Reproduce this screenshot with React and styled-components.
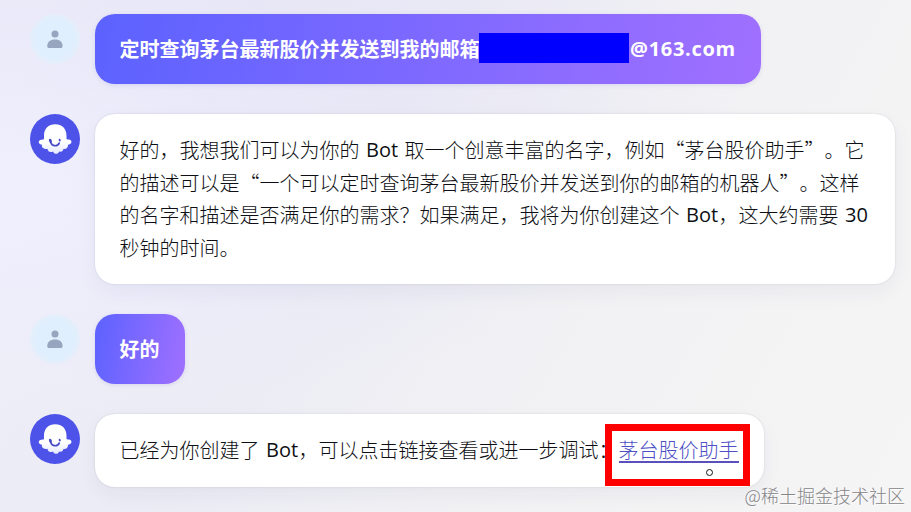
import React from "react";
import styled, { createGlobalStyle, css } from "styled-components";

const GlobalStyle = createGlobalStyle`
  * { box-sizing: border-box; }
  html, body { margin: 0; overflow: hidden; }
`;

const Page = styled.main`
  position: relative;
  width: 911px;
  height: 512px;
  padding: 14px 0 0 30px;
  display: flex;
  flex-direction: column;
  overflow: hidden;
  font-family: "Noto Sans CJK SC", sans-serif;
  font-size: 20px;
  text-spacing-trim: space-all;
  color: #0e0f14;
  background:
    radial-gradient(ellipse 420px 240px at 0 190px, rgba(240, 241, 255, 0.9), rgba(238, 239, 254, 0) 100%),
    radial-gradient(ellipse 560px 300px at 180px 90px, rgba(228, 226, 245, 0.8), rgba(232, 230, 246, 0) 100%),
    linear-gradient(120deg, #eeedf9 0%, #ececf5 38%, #f2f2f4 66%, #f5f5f5 100%);
`;

const Row = styled.div`
  display: flex;
  align-items: flex-start;
  gap: 15px;
  margin-bottom: 30px;
`;

const Avatar = styled.svg`
  display: block;
  flex: none;
  width: 50px;
  height: 50px;
`;

const Bubble = styled.div`
  flex: none;
  width: ${(p) => p.$width}px;
  height: ${(p) => p.$height}px;
  padding: ${(p) => p.$top}px 0 0 24.5px;
  border-radius: 20px;
  line-height: 32.6px;
  white-space: nowrap;
  ${(p) =>
    p.$user
      ? css`
          color: #fff;
          font-weight: 700;
          background: linear-gradient(100deg, #5c62ff 0%, #a070ff 100%);
          box-shadow: 0 1px 4px rgba(90, 80, 180, 0.15);
        `
      : css`
          font-weight: 300;
          background: #fff;
          box-shadow: 0 0 2px rgba(40, 40, 80, 0.16), 0 8px 20px rgba(40, 40, 90, 0.05);
        `}
`;

const Line = styled.div`
  display: flex;
  height: 32.6px;
`;

const Latin = styled.span`
  flex: none;
  width: ${(p) => p.$width}px;
  padding-left: ${(p) => p.$indent ?? 6.5}px;
  font-family: "Open Sans", "Noto Sans", sans-serif;
  font-weight: ${(p) => p.$weight || 500};
  font-size: 20px;
  letter-spacing: ${(p) => p.$spacing || 0}px;
`;

const Redaction = styled.span`
  flex: none;
  width: 150px;
  height: 30px;
  margin: 0 0 0 -0.5px;
  background: #0000ff;
`;

const Link = styled.a`
  position: relative;
  height: 29px;
  color: #4d4fc4;
  border-bottom: 2px solid #5a50bd;
`;

const Highlight = styled.span`
  position: absolute;
  left: -14px;
  top: -10px;
  width: 145px;
  height: 62px;
  border: 7px solid #ff0000;
`;

const Pointer = styled.span`
  position: absolute;
  left: 87px;
  top: 35px;
  width: 7px;
  height: 7px;
  border: 1px solid #151515;
  border-radius: 50%;
  background: #fff;
`;

const Watermark = styled.div`
  position: absolute;
  right: 6px;
  bottom: 5px;
  font-size: 18px;
  line-height: 24px;
  font-weight: 300;
  color: #858588;
  text-shadow: 1px 1px 0 rgba(255, 255, 255, 0.8);
  white-space: nowrap;
`;

const UserAvatar = () => (
  <Avatar viewBox="0 0 50 50">
    <defs>
      <radialGradient id="halo">
        <stop offset="0.75" stopColor="#dfeffd" />
        <stop offset="1" stopColor="#e6eefb" />
      </radialGradient>
    </defs>
    <circle cx="25" cy="25" r="25" fill="url(#halo)" />
    <circle cx="25" cy="20" r="3.5" fill="#98a5bf" />
    <path d="M17.2 32.2C17.2 28 20.2 25.5 25 25.5s7.6 2.5 7.6 6.7c0 1.4-1.1 1.8-2.5 1.8H19.7c-1.4 0-2.5-.4-2.5-1.8Z" fill="#98a5bf" />
  </Avatar>
);

const BotAvatar = () => (
  <Avatar viewBox="0 0 50 50">
    <defs>
      <linearGradient id="ghost" x1="0" y1="0" x2="0" y2="1">
        <stop offset="0.6" stopColor="#ffffff" />
        <stop offset="1" stopColor="#e4e8ff" />
      </linearGradient>
    </defs>
    <circle cx="25" cy="25" r="25" fill="#4d53e8" />
    <path
      d="M25.2 10.2C18.4 10.2 14 14.8 14 21.4V25.2C12.6 26 10.4 25.2 9.2 26.7C8 28.4 9.4 30.6 11.8 30.6C11.5 33.2 13 35 15.6 35C16.3 35 16.9 34.9 17.5 34.7C17.8 37 19.3 38.3 21 38C21.8 37.9 22.5 37.7 23 37.4C23.6 39 24.7 39.8 26 39.8C27.5 39.8 28.6 38.9 29.1 37.4C31.1 38.3 33.2 37.2 33.3 35C35.9 35.6 38.1 33.8 38.1 30.8C40.7 30.8 42.3 28.5 41 26.6C39.9 25.1 37.9 25.9 36.5 25V21.4C36.5 14.8 32.1 10.2 25.2 10.2Z"
      fill="url(#ghost)"
    />
    <ellipse cx="20.4" cy="26.8" rx="1.4" ry="2.1" fill="#4549c4" transform="rotate(-18 20.4 26.8)" />
    <ellipse cx="29.7" cy="26.2" rx="1" ry="1.4" fill="#4549c4" transform="rotate(-15 29.7 26.2)" />
    <path d="M20.8 28.4C22 32.5 27.6 32.9 29.2 29.1" fill="none" stroke="#4549c4" strokeWidth="1.7" strokeLinecap="round" />
  </Avatar>
);

export default function App() {
  return (
    <>
      <GlobalStyle />
      <Page lang="zh-CN">
        <Row>
          <UserAvatar />
          <Bubble $user $width={666} $height={70} $top={19}>
            <Line>
              定时查询茅台最新股价并发送到我的邮箱
              <Redaction />
              <Latin $width={110} $indent={1} $weight={700} $spacing={0.7}>@163.com</Latin>
            </Line>
          </Bubble>
        </Row>
        <Row>
          <BotAvatar />
          <Bubble $width={800} $height={170} $top={20}>
            <Line>好的，我想我们可以为你的<Latin $width={45}>Bot</Latin>取一个创意丰富的名字，例如“茅台股价助手”。它</Line>
            <Line>的描述可以是“一个可以定时查询茅台最新股价并发送到你的邮箱的机器人”。这样</Line>
            <Line>的名字和描述是否满足你的需求？如果满足，我将为你创建这个<Latin $width={39}>Bot</Latin>，这大约需要<Latin $width={34}>30</Latin></Line>
            <Line>秒钟的时间。</Line>
          </Bubble>
        </Row>
        <Row>
          <UserAvatar />
          <Bubble $user $width={90} $height={70} $top={19}>
            <Line>好的</Line>
          </Bubble>
        </Row>
        <Row>
          <BotAvatar />
          <Bubble $width={669} $height={73} $top={20}>
            <Line>
              已经为你创建了<Latin $width={39}>Bot</Latin>，可以点击链接查看或进一步调试：
              <Link>
                茅台股价助手
                <Highlight />
                <Pointer />
              </Link>
            </Line>
          </Bubble>
        </Row>
        <Watermark>@稀土掘金技术社区</Watermark>
      </Page>
    </>
  );
}
